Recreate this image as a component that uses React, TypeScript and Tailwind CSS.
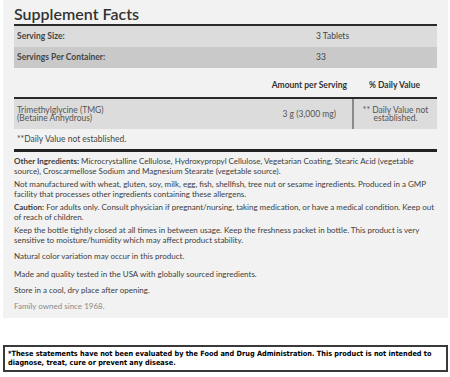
export default function App() {
  const body = { fontFamily: "Lato, 'Noto Sans', sans-serif" } as const;
  return (
    <div className="w-[450px] h-[377px] bg-white overflow-hidden" style={body}>
      <div className="ml-[3px] w-[445px] h-[318px] bg-[#f2f2f2] px-[11px]">
        <h2 className="h-[24px] pt-[4px] text-[16px] leading-[20px] font-semibold text-[#333]">Supplement Facts</h2>
        <div className="border-t-2 border-[#2a2a2a] text-[8.5px] text-[#444]">
          <div className="flex h-[21px] items-center bg-[#dcdcdc]">
            <div className="w-[302px] pl-[3px] font-bold">Serving Size:</div>
            <div>3 Tablets</div>
          </div>
          <div className="flex h-[21px] items-center bg-[#c9c9c9]">
            <div className="w-[302px] pl-[3px] font-bold">Servings Per Container:</div>
            <div>33</div>
          </div>
          <div className="flex h-[29px] items-end pb-[5px] font-bold text-[#333]">
            <div className="w-[338px] pr-[5px] text-right">Amount per Serving</div>
            <div className="flex-1 text-center">% Daily Value</div>
          </div>
          <div className="flex h-[32px] border-t-2 border-[#2a2a2a] bg-[#dcdcdc] text-[#555]">
            <div className="flex flex-1 items-center pl-[3px]">
              <div className="leading-[8.5px]">
                Trimethylglycine (TMG)
                <br />
                (Betaine Anhydrous)
              </div>
            </div>
            <div className="flex items-center pr-[16px]">
              <div>3 g (3,000 mg)</div>
            </div>
            <div className="flex w-[85px] items-center justify-center border-l-2 border-[#8a8a8a]">
              <div className="text-center leading-[8.5px]">
                ** Daily Value not
                <br />
                established.
              </div>
            </div>
          </div>
          <div className="flex h-[20px] items-center pl-[3px] text-[#444]">**Daily Value not established.</div>
          <div className="h-[3px] bg-[#222]" />
        </div>
        <div className="text-[8px] leading-[9.5px] text-[#3d3d3d] whitespace-nowrap">
          <p className="mt-[5px]">
            <span className="font-bold">Other Ingredients:</span> Microcrystalline Cellulose, Hydroxypropyl Cellulose, Vegetarian Coating, Stearic Acid (vegetable
            <br />
            source), Croscarmellose Sodium and Magnesium Stearate (vegetable source).
          </p>
          <p className="mt-[4px]">
            Not manufactured with wheat, gluten, soy, milk, egg, fish, shellfish, tree nut or sesame ingredients. Produced in a GMP
            <br />
            facility that processes other ingredients containing these allergens.
          </p>
          <p className="mt-[4px]">
            <span className="font-bold">Caution:</span> For adults only. Consult physician if pregnant/nursing, taking medication, or have a medical condition. Keep out
            <br />
            of reach of children.
          </p>
          <p className="mt-[4px]">
            Keep the bottle tightly closed at all times in between usage. Keep the freshness packet in bottle. This product is very
            <br />
            sensitive to moisture/humidity which may affect product stability.
          </p>
          <p className="mt-[7px]">Natural color variation may occur in this product.</p>
          <p className="mt-[7px] leading-[10px]">Made and quality tested in the USA with globally sourced ingredients.</p>
          <p className="mt-[6px] leading-[10px]">Store in a cool, dry place after opening.</p>
          <p className="mt-[6px] leading-[10px] text-[#8a8a8a]">Family owned since 1968.</p>
        </div>
      </div>
      <div
        className="ml-[3px] mt-[27px] w-[445px] h-[27px] border-2 border-[#3a3a3a] px-[3px] pt-[3px] text-[7.3px] leading-[8.5px] font-bold text-black whitespace-nowrap"
        style={{ fontFamily: "'DejaVu Sans Condensed', 'DejaVu Sans', sans-serif" }}
      >
        *These statements have not been evaluated by the Food and Drug Administration. This product is not intended to
        <br />
        diagnose, treat, cure or prevent any disease.
      </div>
    </div>
  );
}
